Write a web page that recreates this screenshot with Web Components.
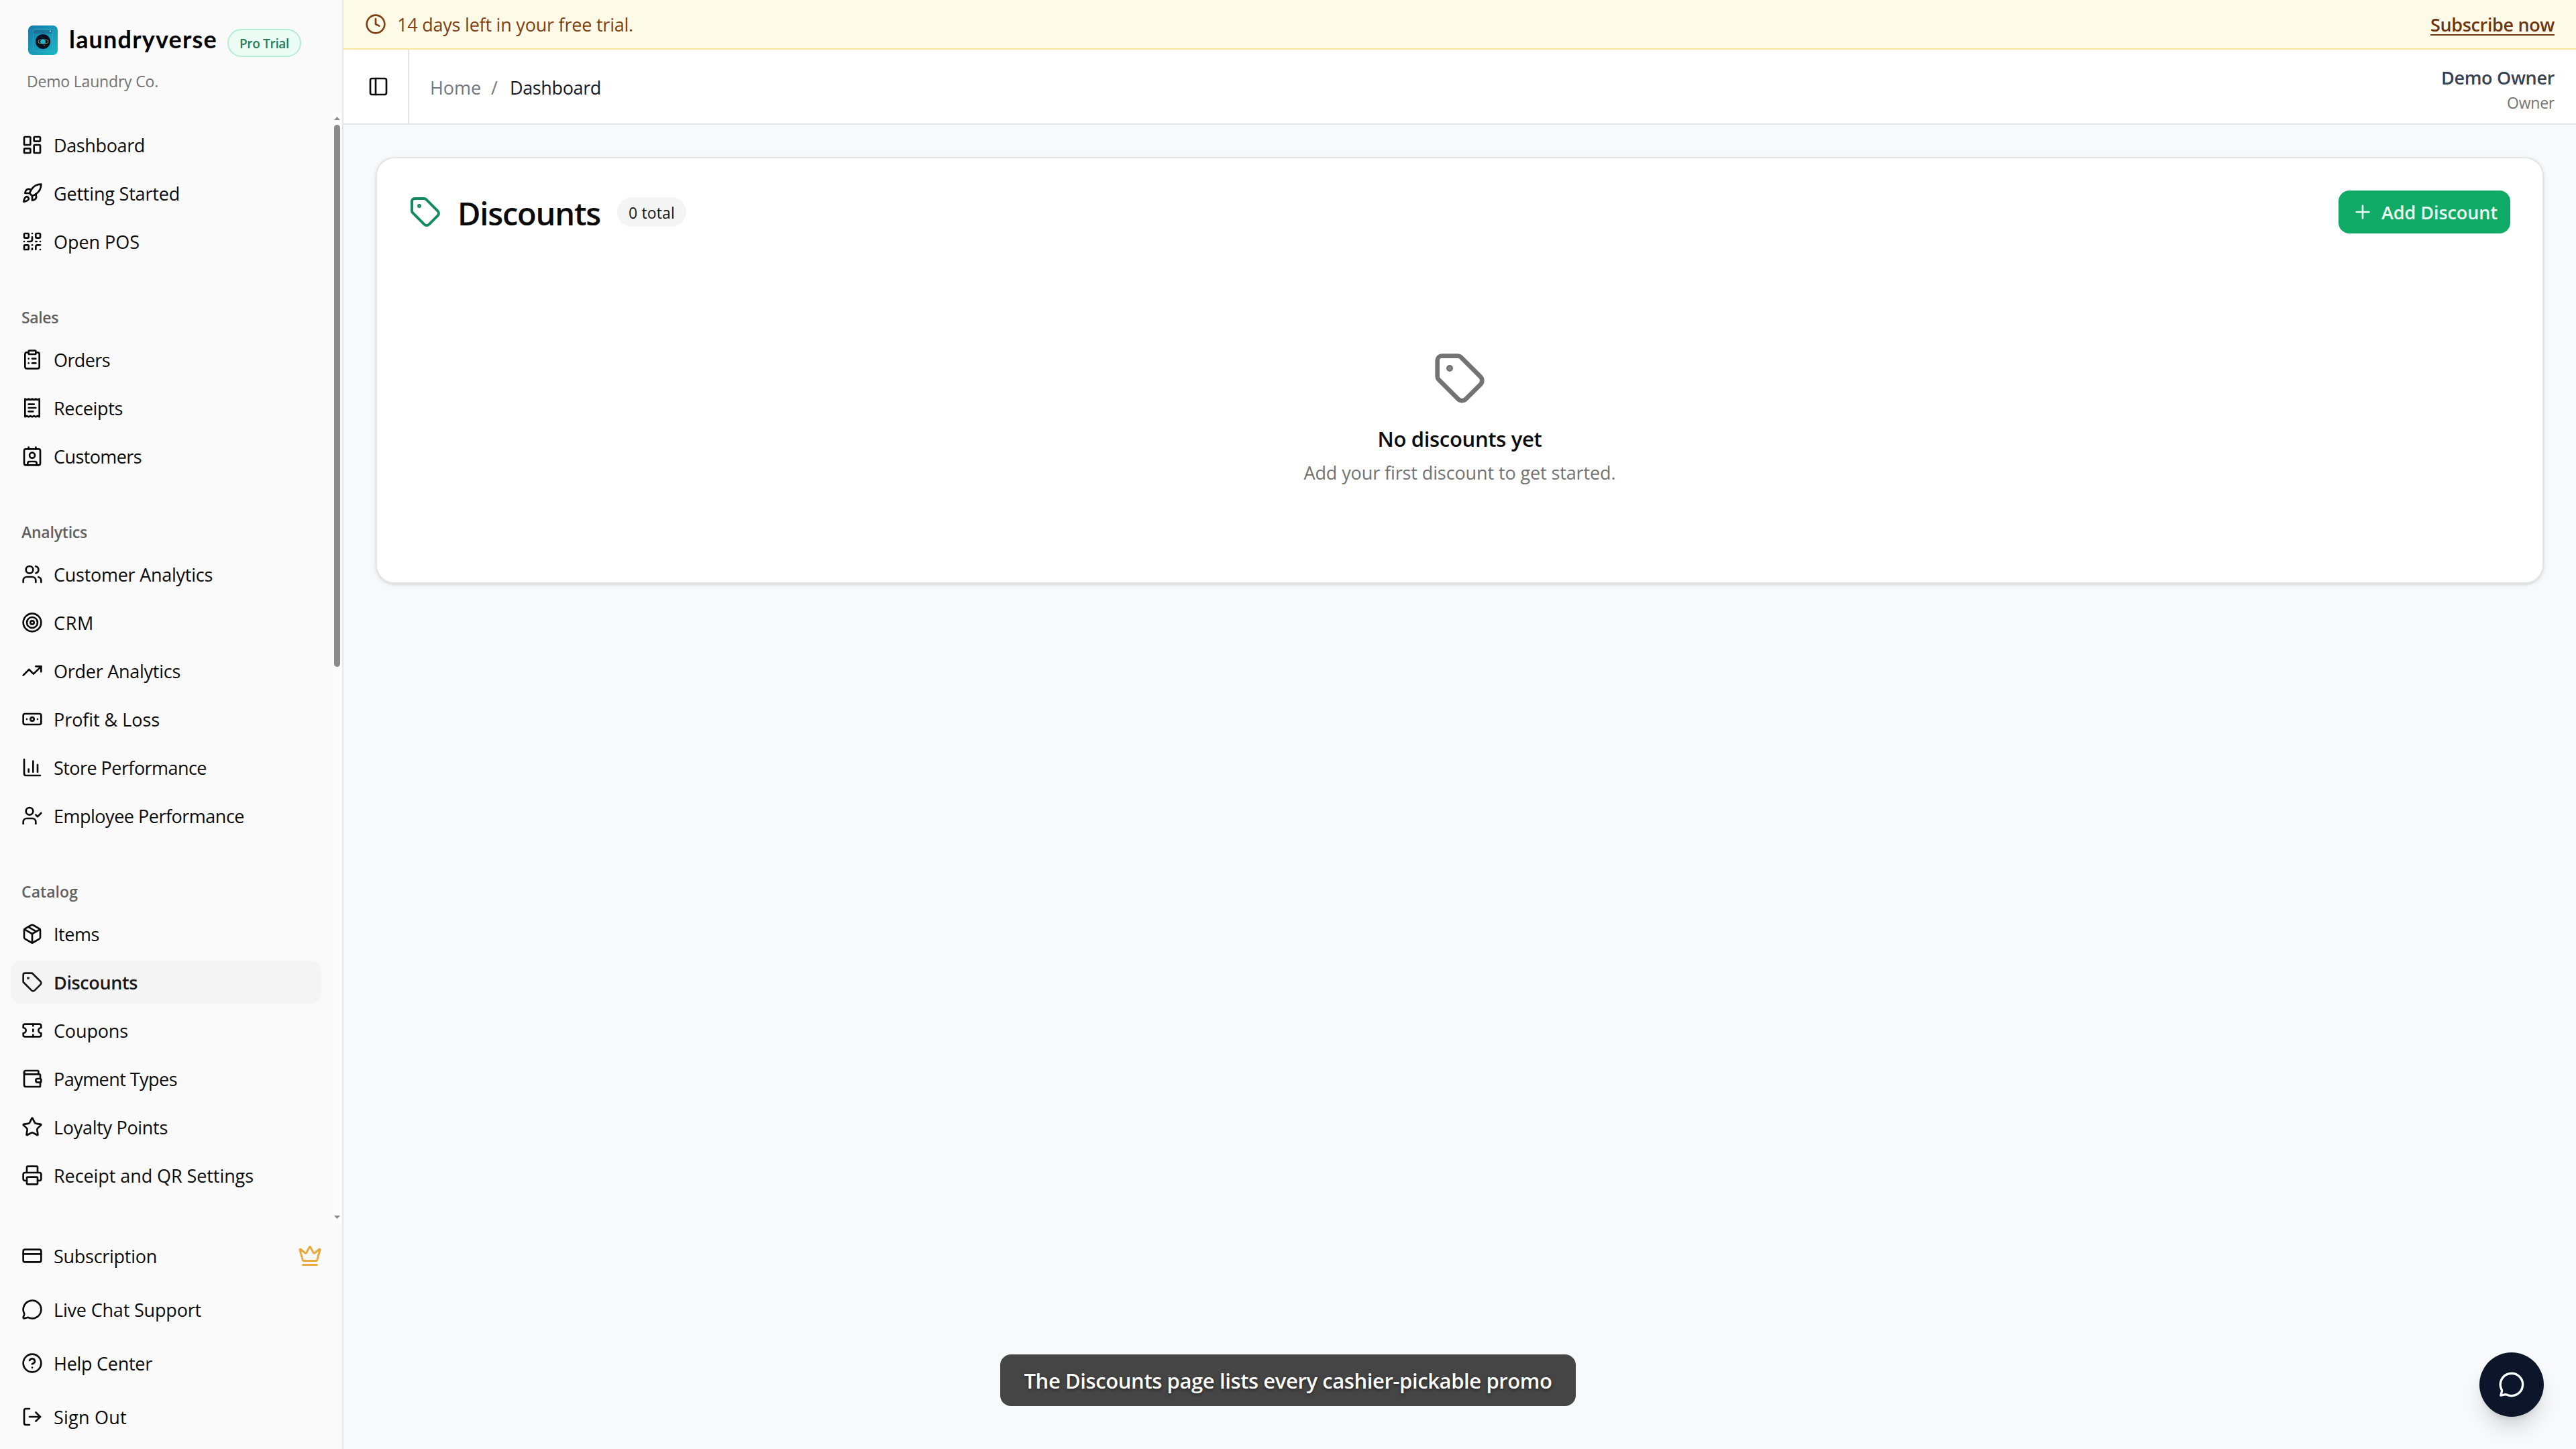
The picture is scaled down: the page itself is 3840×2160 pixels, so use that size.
<!DOCTYPE html>
<html lang="en">
<head>
<meta charset="utf-8">
<title>Laundryverse - Discounts</title>
<style>
	html, body {
		margin: 0;
		height: 100%;
	}
	body {
		font-family: "Open Sans", "Noto Sans", sans-serif;
		font-size: 27px;
		color: #0a0a0a;
		background: #f8f9fb;
		overflow: hidden;
	}
</style>
</head>
<body>
<app-shell></app-shell>

<script>
const ICONS = {
	dashboard: `<rect width="7" height="9" x="3" y="3" rx="1"/><rect width="7" height="5" x="14" y="3" rx="1"/><rect width="7" height="9" x="14" y="12" rx="1"/><rect width="7" height="5" x="3" y="16" rx="1"/>`,
	rocket: `<path d="M4.5 16.5c-1.5 1.26-2 5-2 5s3.74-.5 5-2c.71-.84.7-2.13-.09-2.91a2.18 2.18 0 0 0-2.91-.09z"/><path d="m12 15-3-3a22 22 0 0 1 2-3.95A12.88 12.88 0 0 1 22 2c0 2.72-.78 7.5-6 11a22.35 22.35 0 0 1-4 2z"/><path d="M9 12H4s.55-3.03 2-4c1.62-1.08 5 0 5 0"/><path d="M12 15v5s3.03-.55 4-2c1.08-1.62 0-5 0-5"/>`,
	qr: `<rect width="5" height="5" x="3" y="3" rx="1"/><rect width="5" height="5" x="16" y="3" rx="1"/><rect width="5" height="5" x="3" y="16" rx="1"/><path d="M21 16h-3a2 2 0 0 0-2 2v3"/><path d="M21 21v.01"/><path d="M12 7v3a2 2 0 0 1-2 2H7"/><path d="M3 12h.01"/><path d="M12 3h.01"/><path d="M12 16v.01"/><path d="M16 12h1"/><path d="M21 12v.01"/><path d="M12 21v-1"/>`,
	clipboard: `<rect width="8" height="4" x="8" y="2" rx="1"/><path d="M16 4h2a2 2 0 0 1 2 2v14a2 2 0 0 1-2 2H6a2 2 0 0 1-2-2V6a2 2 0 0 1 2-2h2"/><path d="M12 11h4"/><path d="M12 16h4"/><path d="M8 11h.01"/><path d="M8 16h.01"/>`,
	receipt: `<path d="M4 2v20l2-1 2 1 2-1 2 1 2-1 2 1 2-1 2 1V2l-2 1-2-1-2 1-2-1-2 1-2-1-2 1Z"/><path d="M14 8H8"/><path d="M16 12H8"/><path d="M13 16H8"/>`,
	contact: `<path d="M16 2v2"/><path d="M7 22v-2a2 2 0 0 1 2-2h6a2 2 0 0 1 2 2v2"/><path d="M8 2v2"/><circle cx="12" cy="11" r="3"/><rect x="3" y="4" width="18" height="18" rx="2"/>`,
	users: `<path d="M16 21v-2a4 4 0 0 0-4-4H6a4 4 0 0 0-4 4v2"/><circle cx="9" cy="7" r="4"/><path d="M22 21v-2a4 4 0 0 0-3-3.87"/><path d="M16 3.13a4 4 0 0 1 0 7.75"/>`,
	target: `<circle cx="12" cy="12" r="10"/><circle cx="12" cy="12" r="6"/><circle cx="12" cy="12" r="2"/>`,
	trending: `<path d="m22 7-8.5 8.5-5-5L2 17"/><path d="M16 7h6v6"/>`,
	banknote: `<rect width="20" height="12" x="2" y="6" rx="2"/><circle cx="12" cy="12" r="2"/><path d="M6 12h.01M18 12h.01"/>`,
	chart: `<path d="M3 3v16a2 2 0 0 0 2 2h16"/><path d="M18 17V9"/><path d="M13 17V5"/><path d="M8 17v-3"/>`,
	usercheck: `<path d="m16 11 2 2 4-4"/><path d="M16 21v-2a4 4 0 0 0-4-4H6a4 4 0 0 0-4 4v2"/><circle cx="9" cy="7" r="4"/>`,
	package: `<path d="M11 21.73a2 2 0 0 0 2 0l7-4A2 2 0 0 0 21 16V8a2 2 0 0 0-1-1.73l-7-4a2 2 0 0 0-2 0l-7 4A2 2 0 0 0 3 8v8a2 2 0 0 0 1 1.73z"/><path d="M12 22V12"/><path d="m3.3 7 8.7 5 8.7-5"/><path d="m7.5 4.27 9 5.15"/>`,
	tag: `<path d="M12.586 2.586A2 2 0 0 0 11.172 2H4a2 2 0 0 0-2 2v7.172a2 2 0 0 0 .586 1.414l8.704 8.704a2.426 2.426 0 0 0 3.42 0l6.58-6.58a2.426 2.426 0 0 0 0-3.42z"/><circle cx="7.5" cy="7.5" r=".5" fill="currentColor"/>`,
	ticket: `<path d="M2 9a3 3 0 0 1 0 6v2a2 2 0 0 0 2 2h16a2 2 0 0 0 2-2v-2a3 3 0 0 1 0-6V7a2 2 0 0 0-2-2H4a2 2 0 0 0-2 2Z"/><path d="M13 5v2"/><path d="M13 17v2"/><path d="M13 11v2"/>`,
	wallet: `<path d="M19 7V4a1 1 0 0 0-1-1H5a2 2 0 0 0 0 4h15a1 1 0 0 1 1 1v4h-3a2 2 0 0 0 0 4h3a1 1 0 0 0 1-1v-2a1 1 0 0 0-1-1"/><path d="M3 5v14a2 2 0 0 0 2 2h15a1 1 0 0 0 1-1v-4"/>`,
	star: `<path d="M11.525 2.295a.53.53 0 0 1 .95 0l2.31 4.679a2.123 2.123 0 0 0 1.595 1.16l5.166.756a.53.53 0 0 1 .294.904l-3.736 3.638a2.123 2.123 0 0 0-.611 1.878l.882 5.14a.53.53 0 0 1-.771.56l-4.618-2.428a2.122 2.122 0 0 0-1.973 0L6.396 21.01a.53.53 0 0 1-.77-.56l.881-5.139a2.122 2.122 0 0 0-.611-1.879L2.16 9.795a.53.53 0 0 1 .294-.906l5.165-.755a2.122 2.122 0 0 0 1.597-1.16z"/>`,
	printer: `<path d="M6 18H4a2 2 0 0 1-2-2v-5a2 2 0 0 1 2-2h16a2 2 0 0 1 2 2v5a2 2 0 0 1-2 2h-2"/><path d="M6 9V3a1 1 0 0 1 1-1h10a1 1 0 0 1 1 1v6"/><rect x="6" y="14" width="12" height="8" rx="1"/>`,
	card: `<rect width="20" height="14" x="2" y="5" rx="2"/><path d="M2 10h20"/>`,
	message: `<path d="M2.992 16.342a2 2 0 0 1 .094 1.167l-1.065 3.29a1 1 0 0 0 1.236 1.168l3.413-.998a2 2 0 0 1 1.099.092 10 10 0 1 0-4.777-4.719"/>`,
	bubble: `<path d="M3 16.4q.5 1 .2 2L2.3 21.7l3.6-.8q1-.1 2 .2A10 10 0 1 0 3 16.4z"/>`,
	help: `<circle cx="12" cy="12" r="10"/><path d="M9.09 9a3 3 0 0 1 5.83 1c0 2-3 3-3 3"/><path d="M12 17h.01"/>`,
	logout: `<path d="m16 17 5-5-5-5"/><path d="M21 12H9"/><path d="M9 21H5a2 2 0 0 1-2-2V5a2 2 0 0 1 2-2h4"/>`,
	crown: `<path d="M11.562 3.266a.5.5 0 0 1 .876 0L15.39 8.87a1 1 0 0 0 1.516.294L21.183 5.5a.5.5 0 0 1 .798.519l-2.834 10.246a1 1 0 0 1-.956.734H5.81a1 1 0 0 1-.957-.734L2.02 6.02a.5.5 0 0 1 .798-.519l4.276 3.664a1 1 0 0 0 1.516-.294z"/><path d="M5 21h14"/>`,
	clock: `<circle cx="12" cy="12" r="10"/><path d="M12 6v6l4 2"/>`,
	panel: `<rect width="18" height="18" x="3" y="3" rx="2"/><path d="M9 3v18"/>`,
	plus: `<path d="M5 12h14"/><path d="M12 5v14"/>`
};

class UiIcon extends HTMLElement {
	connectedCallback() {
		const size = this.getAttribute("size") || 32;
		this.attachShadow({ mode: "open" }).innerHTML = `
			<style>
				:host { display: block; flex: none; width: ${size}px; height: ${size}px; }
				svg { display: block; }
			</style>
			<svg width="${size}" height="${size}" viewBox="0 0 24 24" fill="none" stroke="currentColor" stroke-width="2" stroke-linecap="round" stroke-linejoin="round">${ICONS[this.getAttribute("name")]}</svg>
		`;
	}
}

// One line of text, tracked so that it takes up exactly `width` pixels.
class FitText extends HTMLElement {
	connectedCallback() {
		this.attachShadow({ mode: "open" }).innerHTML = `
			<style>
				:host { display: block; flex: none; white-space: nowrap; padding-top: 0.06em; }
				span { display: inline-block; }
				:host([underline]) span {
					text-decoration: underline;
					text-decoration-thickness: 2px;
					text-underline-offset: 4px;
				}
			</style>
			<span><slot></slot></span>
		`;
		const width = Number(this.getAttribute("width"));
		if (!width) return;
		const span = this.shadowRoot.querySelector("span");
		const count = this.textContent.length;
		const spacing = (width - span.getBoundingClientRect().width) / count;
		span.style.letterSpacing = spacing.toFixed(3) + "px";
	}
}

class BrandLogo extends HTMLElement {
	connectedCallback() {
		this.attachShadow({ mode: "open" }).innerHTML = `
			<style>
				:host { display: block; flex: none; width: 44px; height: 44px; }
				svg { display: block; }
			</style>
			<svg width="44" height="44" viewBox="0 0 44 44">
				<defs>
					<linearGradient id="bg" x1="0" y1="0" x2="1" y2="1">
						<stop offset="0" stop-color="#1878a8"/>
						<stop offset="1" stop-color="#17b9c6"/>
					</linearGradient>
				</defs>
				<rect width="44" height="44" rx="7" fill="url(#bg)"/>
				<rect x="7.5" y="5.5" width="29" height="33" rx="2" fill="none" stroke="#49a9cc" stroke-opacity=".55"/>
				<rect x="8" y="7" width="28" height="5" fill="#1d6a8c" fill-opacity=".7"/>
				<circle cx="33" cy="8.5" r="1" fill="#d9f3e0"/>
				<circle cx="22" cy="24" r="11" fill="#07101f"/>
				<rect x="15" y="21.5" width="15" height="5" rx="2.5" fill="none" stroke="#a98d45" stroke-width="1"/>
				<circle cx="22" cy="24" r="3.8" fill="#21b8cf"/>
				<circle cx="24" cy="29.5" r=".7" fill="#c8a44d"/>
				<circle cx="20" cy="17" r=".5" fill="#2e8fb0"/>
			</svg>
		`;
	}
}

class NavItem extends HTMLElement {
	connectedCallback() {
		this.attachShadow({ mode: "open" }).innerHTML = `
			<style>
				:host {
					display: flex;
					align-items: center;
					gap: 16px;
					height: 64px;
					padding: 0 0 0 16px;
					border-radius: 16px;
					box-sizing: border-box;
				}
				:host([active]) { background: #f4f4f5; color: #171717; font-weight: 600; }
				.end { margin-left: auto; color: #e8a93d; }
			</style>
			<ui-icon name="${this.getAttribute("icon")}"></ui-icon>
			<fit-text width="${this.getAttribute("width")}">${this.getAttribute("label").replace("&", "&amp;")}</fit-text>
			<div class="end"><slot></slot></div>
		`;
	}
}

class NavGroup extends HTMLElement {
	connectedCallback() {
		const label = this.getAttribute("label");
		this.attachShadow({ mode: "open" }).innerHTML = `
			<style>
				:host { display: block; padding: 16px; }
				.label {
					display: flex;
					align-items: center;
					height: 64px;
					padding: 0 16px;
					font-size: 23px;
					font-weight: 600;
					color: #606060;
				}
				.menu { display: flex; flex-direction: column; gap: 8px; }
			</style>
			${label ? `<div class="label"><fit-text width="${this.getAttribute("width")}">${label}</fit-text></div>` : ""}
			<div class="menu"><slot></slot></div>
		`;
	}
}

class AppSidebar extends HTMLElement {
	connectedCallback() {
		this.attachShadow({ mode: "open" }).innerHTML = `
			<style>
				:host {
					display: flex;
					flex-direction: column;
					box-sizing: border-box;
					height: 2160px;
					background: #fafafa;
					border-right: 2px solid #e5e5e5;
				}
				header { height: 168px; padding: 32px 40px 0; box-sizing: border-box; }
				.brand { display: flex; align-items: center; height: 56px; }
				.brand brand-logo { margin: 0 17px 0 2px; }
				.name {
					margin-top: -6px;
					font-family: Lato, "Open Sans", sans-serif;
					font-size: 36px;
					font-weight: 700;
					color: #000;
				}
				.badge {
					display: flex;
					align-items: center;
					justify-content: center;
					box-sizing: border-box;
					width: 110px;
					height: 42px;
					margin: 8px 0 0 15px;
					border: 2px solid #b5ecd4;
					border-radius: 21px;
					background: #ecfdf5;
					color: #257d57;
					font-size: 19px;
					font-weight: 600;
				}
				.company { margin-top: 16px; font-size: 23px; line-height: 32px; color: #737373; }
				.scroll { display: flex; height: 1656px; overflow: hidden; }
				.groups { flex: 1; display: flex; flex-direction: column; gap: 16px; }
				.bar {
					display: flex;
					flex-direction: column;
					align-items: center;
					width: 15px;
					box-sizing: border-box;
					padding: 6px 0 7px 0;
					background: #fcfcfc;
				}
				.thumb { width: 9px; height: 808px; margin: 7px 0 auto; border-radius: 5px; background: #8b8b8b; }
				footer { display: flex; flex-direction: column; gap: 16px; padding: 16px; margin-right: 14px; }
			</style>
			<header>
				<div class="brand">
					<brand-logo></brand-logo>
					<fit-text class="name" width="221">laundryverse</fit-text>
					<div class="badge"><fit-text width="74">Pro Trial</fit-text></div>
				</div>
				<div class="company"><fit-text width="196">Demo Laundry Co.</fit-text></div>
			</header>
			<div class="scroll">
				<div class="groups">
					<nav-group>
						<nav-item icon="dashboard" label="Dashboard" width="136"></nav-item>
						<nav-item icon="rocket" label="Getting Started" width="188"></nav-item>
						<nav-item icon="qr" label="Open POS" width="128"></nav-item>
					</nav-group>
					<nav-group label="Sales" width="55">
						<nav-item icon="clipboard" label="Orders" width="84"></nav-item>
						<nav-item icon="receipt" label="Receipts" width="103"></nav-item>
						<nav-item icon="contact" label="Customers" width="131"></nav-item>
					</nav-group>
					<nav-group label="Analytics" width="98">
						<nav-item icon="users" label="Customer Analytics" width="237"></nav-item>
						<nav-item icon="target" label="CRM" width="60"></nav-item>
						<nav-item icon="trending" label="Order Analytics" width="189"></nav-item>
						<nav-item icon="banknote" label="Profit & Loss" width="158"></nav-item>
						<nav-item icon="chart" label="Store Performance" width="228"></nav-item>
						<nav-item icon="usercheck" label="Employee Performance" width="284"></nav-item>
					</nav-group>
					<nav-group label="Catalog" width="84">
						<nav-item icon="package" label="Items" width="68"></nav-item>
						<nav-item icon="tag" label="Discounts" width="125" active></nav-item>
						<nav-item icon="ticket" label="Coupons" width="111"></nav-item>
						<nav-item icon="wallet" label="Payment Types" width="184"></nav-item>
						<nav-item icon="star" label="Loyalty Points" width="170"></nav-item>
						<nav-item icon="printer" label="Receipt and QR Settings" width="298"></nav-item>
					</nav-group>
				</div>
				<div class="bar">
					<svg width="9" height="5" viewBox="0 0 9 5"><path d="M0 5 4.5 0 9 5z" fill="#8b8b8b"/></svg>
					<div class="thumb"></div>
					<svg width="9" height="5" viewBox="0 0 9 5"><path d="M0 0 4.5 5 9 0z" fill="#8b8b8b"/></svg>
				</div>
			</div>
			<footer>
				<nav-item icon="card" label="Subscription" width="154"><ui-icon name="crown" size="36"></ui-icon></nav-item>
				<nav-item icon="message" label="Live Chat Support" width="220"></nav-item>
				<nav-item icon="help" label="Help Center" width="147"></nav-item>
				<nav-item icon="logout" label="Sign Out" width="109"></nav-item>
			</footer>
		`;
	}
}

class TrialBanner extends HTMLElement {
	connectedCallback() {
		this.attachShadow({ mode: "open" }).innerHTML = `
			<style>
				:host {
					display: flex;
					align-items: center;
					gap: 16px;
					box-sizing: border-box;
					height: 74px;
					padding: 0 32px;
					background: #fdfbe8;
					border-bottom: 2px solid #f6e7a1;
					color: #7f3f10;
				}
				.link {
					margin-left: auto;
					color: #6c350e;
					font-weight: 600;
				}
			</style>
			<ui-icon name="clock"></ui-icon>
			<fit-text width="352">14 days left in your free trial.</fit-text>
			<fit-text class="link" width="185" underline>Subscribe now</fit-text>
		`;
	}
}

class TopBar extends HTMLElement {
	connectedCallback() {
		this.attachShadow({ mode: "open" }).innerHTML = `
			<style>
				:host {
					display: flex;
					align-items: center;
					box-sizing: border-box;
					height: 112px;
					background: #fff;
					border-bottom: 2px solid #e5e5e5;
				}
				.toggle {
					display: flex;
					align-items: center;
					box-sizing: border-box;
					width: 98px;
					height: 110px;
					padding-left: 36px;
					border-right: 2px solid #e5e5e5;
				}
				.crumbs { display: flex; gap: 15px; padding: 1px 0 0 31px; color: #737980; }
				.crumbs .here { color: #111827; }
				.user {
					display: flex;
					flex-direction: column;
					align-items: flex-end;
					margin: 8px 32px 0 auto;
					color: #364153;
					font-weight: 600;
					line-height: 39px;
				}
				.role { font-size: 23px; font-weight: 400; line-height: 35px; color: #737373; }
			</style>
			<div class="toggle"><ui-icon name="panel"></ui-icon></div>
			<div class="crumbs">
				<fit-text width="76">Home</fit-text>
				<fit-text width="13">/</fit-text>
				<fit-text class="here" width="136">Dashboard</fit-text>
			</div>
			<div class="user">
				<fit-text width="169">Demo Owner</fit-text>
				<fit-text class="role" width="71">Owner</fit-text>
			</div>
		`;
	}
}

class DiscountsCard extends HTMLElement {
	connectedCallback() {
		this.attachShadow({ mode: "open" }).innerHTML = `
			<style>
				:host {
					display: block;
					box-sizing: border-box;
					height: 636px;
					margin: 48px;
					padding: 48px;
					background: #fff;
					border: 2px solid #e5e5e5;
					border-radius: 28px;
					box-shadow: 0 2px 6px rgba(0, 0, 0, 0.1), 0 2px 4px -2px rgba(0, 0, 0, 0.1);
				}
				.head { display: flex; align-items: center; height: 64px; }
				.head ui-icon { color: #118a5c; }
				h1 { margin: 2px 0 0 24px; font-size: 47px; font-weight: 600; line-height: 64px; }
				.count {
					display: flex;
					align-items: center;
					justify-content: center;
					width: 103px;
					height: 44px;
					margin-left: 25px;
					border-radius: 22px;
					background: #f4f4f5;
					color: #171717;
					font-size: 23px;
				}
				.add {
					display: flex;
					align-items: center;
					gap: 12px;
					box-sizing: border-box;
					width: 256px;
					height: 64px;
					margin-left: auto;
					padding: 0 20px;
					border-radius: 16px;
					background: #0fab66;
					color: #ecfdf5;
					font-weight: 600;
				}
				.head .add ui-icon { color: #ecfdf5; }
				.empty {
					display: flex;
					flex-direction: column;
					align-items: center;
					padding-top: 176px;
					color: #737373;
				}
				.title { margin-top: 24px; font-size: 31px; font-weight: 600; line-height: 48px; color: #0a0a0a; }
				.hint { margin-top: 6px; line-height: 40px; }
			</style>
			<div class="head">
				<ui-icon name="tag" size="48"></ui-icon>
				<h1><fit-text width="213">Discounts</fit-text></h1>
				<div class="count"><fit-text width="69">0 total</fit-text></div>
				<div class="add"><ui-icon name="plus"></ui-icon><fit-text width="173">Add Discount</fit-text></div>
			</div>
			<div class="empty">
				<ui-icon name="tag" size="80"></ui-icon>
				<fit-text class="title" width="245">No discounts yet</fit-text>
				<fit-text class="hint" width="465">Add your first discount to get started.</fit-text>
			</div>
		`;
	}
}

class CaptionToast extends HTMLElement {
	connectedCallback() {
		this.attachShadow({ mode: "open" }).innerHTML = `
			<style>
				:host {
					position: absolute;
					left: 1491px;
					top: 2019px;
					display: flex;
					align-items: center;
					justify-content: center;
					width: 858px;
					height: 77px;
					border-radius: 16px;
					background: #454545;
					color: #fff;
					font-size: 31px;
					font-weight: 600;
					text-shadow: 0 2px 4px rgba(0, 0, 0, 0.5);
				}
			</style>
			<fit-text width="787">The Discounts page lists every cashier-pickable promo</fit-text>
		`;
	}
}

class ChatButton extends HTMLElement {
	connectedCallback() {
		this.attachShadow({ mode: "open" }).innerHTML = `
			<style>
				:host {
					position: absolute;
					right: 48px;
					bottom: 48px;
					display: flex;
					align-items: center;
					justify-content: center;
					width: 96px;
					height: 96px;
					border-radius: 50%;
					background: #0d152a;
					color: #fff;
					box-shadow: 0 20px 30px -6px rgba(0, 0, 0, 0.16), 0 8px 12px -8px rgba(0, 0, 0, 0.14);
				}
			</style>
			<ui-icon name="bubble" size="40"></ui-icon>
		`;
	}
}

class AppShell extends HTMLElement {
	connectedCallback() {
		this.attachShadow({ mode: "open" }).innerHTML = `
			<style>
				:host {
					display: grid;
					grid-template-columns: 512px 1fr;
					width: 3840px;
					height: 2160px;
				}
			</style>
			<app-sidebar></app-sidebar>
			<main>
				<trial-banner></trial-banner>
				<top-bar></top-bar>
				<discounts-card></discounts-card>
			</main>
			<caption-toast></caption-toast>
			<chat-button></chat-button>
		`;
	}
}

customElements.define("app-shell", AppShell);
customElements.define("app-sidebar", AppSidebar);
customElements.define("nav-group", NavGroup);
customElements.define("nav-item", NavItem);
customElements.define("trial-banner", TrialBanner);
customElements.define("top-bar", TopBar);
customElements.define("discounts-card", DiscountsCard);
customElements.define("caption-toast", CaptionToast);
customElements.define("chat-button", ChatButton);
customElements.define("brand-logo", BrandLogo);
customElements.define("ui-icon", UiIcon);
// last, so every text is measured with its parents' styles in place
customElements.define("fit-text", FitText);
</script>
</body>
</html>
